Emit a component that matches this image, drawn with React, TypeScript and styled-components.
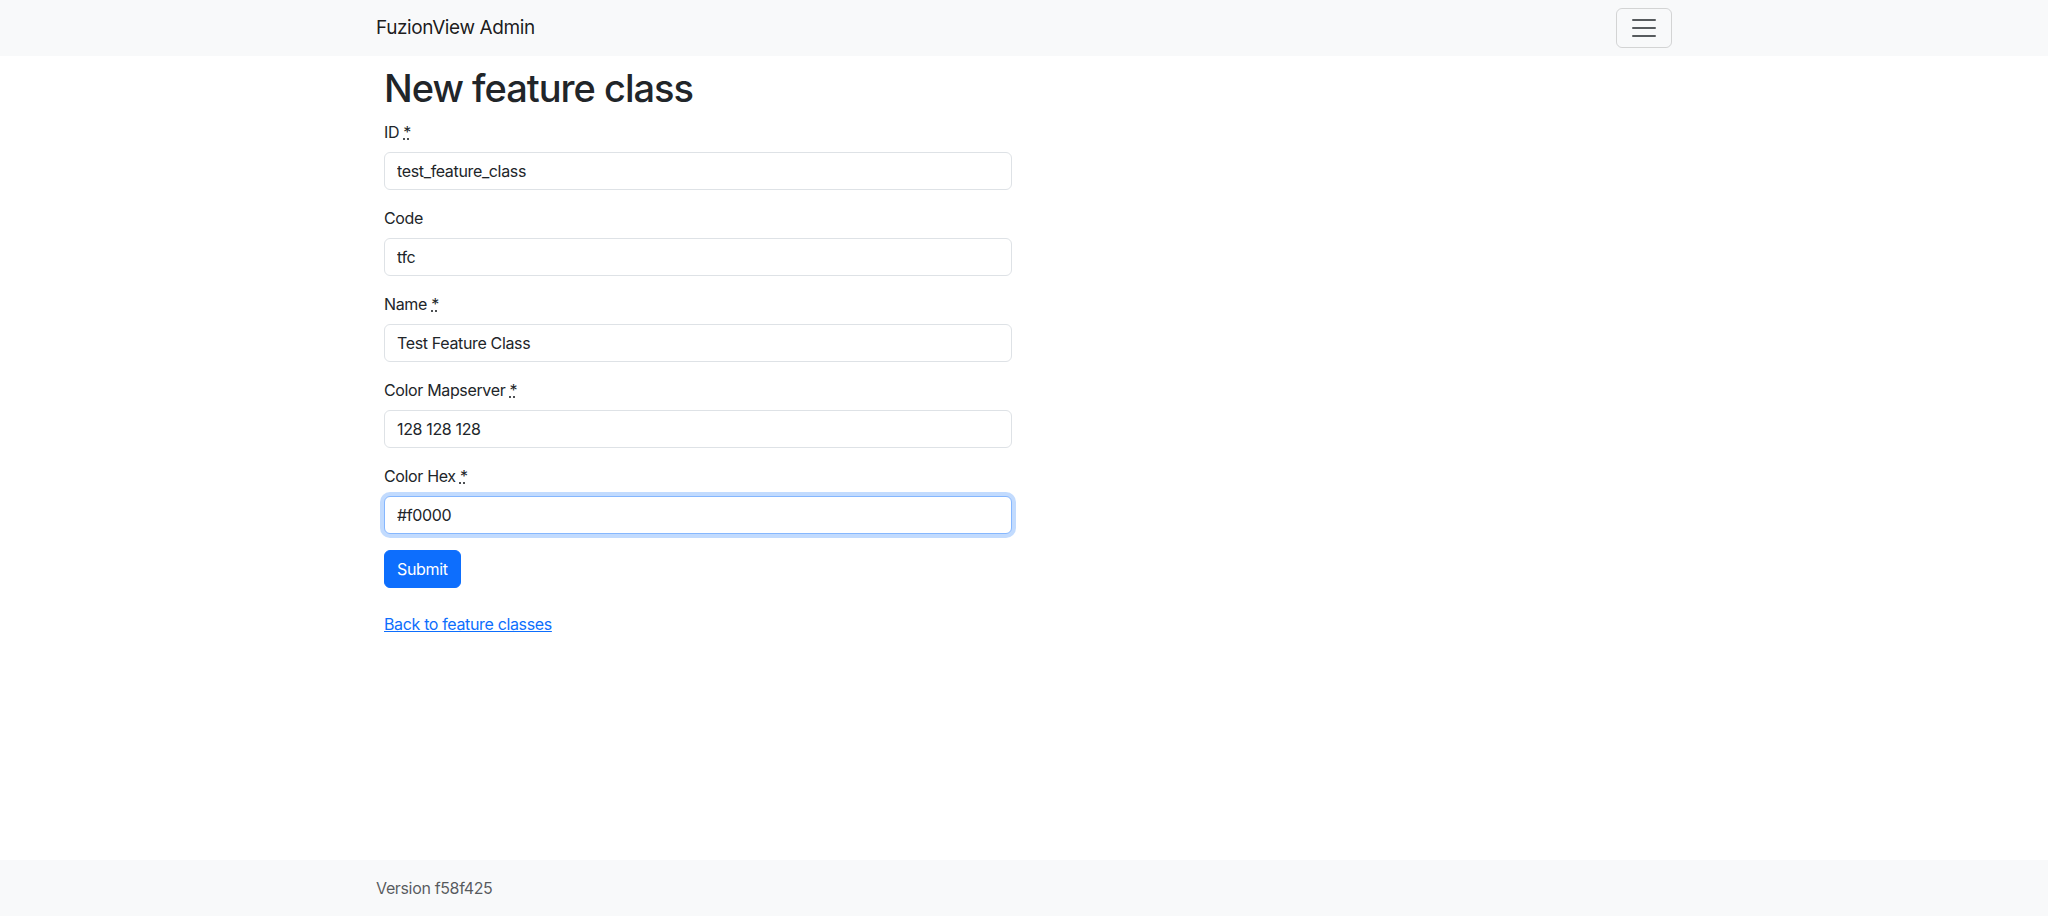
import React from "react";
import styled, { createGlobalStyle, css } from "styled-components";

const GlobalStyle = createGlobalStyle`
  *, *::before, *::after { box-sizing: border-box; }
  html, body { margin: 0; padding: 0; }
  body {
    font-family: Inter, "Liberation Sans", Arial, sans-serif;
    font-size: 16px;
    line-height: 1.5;
    color: #212529;
    background: #fff;
    -webkit-font-smoothing: antialiased;
  }
`;

const Page = styled.div`
  min-height: 100vh;
  display: flex;
  flex-direction: column;
`;

const Container = styled.div`
  width: 1320px;
  margin: 0 auto;
  padding: 0 12px;
`;

const NavBar = styled.nav`
  background: #f8f9fa;
  padding: 8px 0;
`;

const NavInner = styled(Container)`
  display: flex;
  align-items: center;
  justify-content: space-between;
`;

const Brand = styled.a`
  font-size: 19px;
  line-height: 30px;
  padding: 5px 0;
  color: rgba(0, 0, 0, 0.9);
  text-decoration: none;
  letter-spacing: -0.4px;
`;

const Toggler = styled.button`
  width: 56px;
  height: 40px;
  padding: 4px 12px;
  border: 1px solid rgba(0, 0, 0, 0.15);
  border-radius: 6px;
  background: transparent;
  display: flex;
  align-items: center;
  justify-content: center;
  cursor: pointer;
`;

const Main = styled.main`
  flex: 1;
`;

const Content = styled.div`
  padding: 8px;
`;

const Title = styled.h1`
  font-size: 38px;
  font-weight: 500;
  line-height: 48px;
  margin: 0 0 8px;
  letter-spacing: -1px;
`;

const Form = styled.form`
  width: 628px;
`;

const Group = styled.div`
  margin-bottom: 16px;
`;

const Label = styled.label`
  display: inline-block;
  margin-bottom: 8px;
  letter-spacing: -0.35px;
`;

const Req = styled.abbr`
  text-decoration: underline dotted;
  cursor: help;
`;

const Input = styled.input<{ $focused?: boolean }>`
  display: block;
  width: 100%;
  height: 38px;
  padding: 6px 12px;
  font: inherit;
  font-size: 16px;
  line-height: 1.5;
  color: #212529;
  background: #fff;
  border: 1px solid #dee2e6;
  border-radius: 6px;
  outline: none;
  letter-spacing: -0.35px;
  ${(p) =>
    p.$focused &&
    css`
      border-color: #86b7fe;
      box-shadow: 0 0 0 4px rgba(13, 110, 253, 0.25);
    `}
  &:focus {
    border-color: #86b7fe;
    box-shadow: 0 0 0 4px rgba(13, 110, 253, 0.25);
  }
`;

const SubmitButton = styled.button`
  height: 38px;
  padding: 6px 12px;
  font: inherit;
  font-size: 16px;
  line-height: 1.5;
  color: #fff;
  background: #0d6efd;
  border: 1px solid #0d6efd;
  border-radius: 6px;
  cursor: pointer;
  letter-spacing: -0.35px;
`;

const BackLink = styled.a`
  display: inline-block;
  margin-top: 24px;
  color: #0d6efd;
  text-decoration: underline;
  letter-spacing: -0.35px;
`;

const Footer = styled.footer`
  background: #f8f9fa;
  padding: 16px 0;
`;

const FooterText = styled.span`
  color: rgba(33, 37, 41, 0.75);
  letter-spacing: -0.35px;
`;

type Field = { id: string; label: string; required: boolean; value: string; focused?: boolean };

const fields: Field[] = [
  { id: "id", label: "ID", required: true, value: "test_feature_class" },
  { id: "code", label: "Code", required: false, value: "tfc" },
  { id: "name", label: "Name", required: true, value: "Test Feature Class" },
  { id: "color_mapserver", label: "Color Mapserver", required: true, value: "128 128 128" },
  { id: "color_hex", label: "Color Hex", required: true, value: "#f0000", focused: true },
];

export default function App() {
  return (
    <>
      <GlobalStyle />
      <Page>
        <NavBar>
          <NavInner>
            <Brand href="#">FuzionView Admin</Brand>
            <Toggler type="button" aria-label="Toggle navigation">
              <svg width="30" height="30" viewBox="0 0 30 30">
                <path
                  d="M4 7h22M4 15h22M4 23h22"
                  stroke="rgba(33,37,41,0.75)"
                  strokeWidth="2"
                  strokeLinecap="round"
                  strokeMiterlimit="10"
                />
              </svg>
            </Toggler>
          </NavInner>
        </NavBar>
        <Main>
          <Container>
            <Content>
              <Title>New feature class</Title>
              <Form onSubmit={(e) => e.preventDefault()}>
                {fields.map((f) => (
                  <Group key={f.id}>
                    <Label htmlFor={f.id}>
                      {f.label}
                      {f.required && (
                        <>
                          {" "}
                          <Req title="required">*</Req>
                        </>
                      )}
                    </Label>
                    <Input
                      id={f.id}
                      type="text"
                      defaultValue={f.value}
                      $focused={f.focused}
                      autoFocus={f.focused}
                    />
                  </Group>
                ))}
                <SubmitButton type="submit">Submit</SubmitButton>
              </Form>
              <BackLink href="#">Back to feature classes</BackLink>
            </Content>
          </Container>
        </Main>
        <Footer>
          <Container>
            <FooterText>Version f58f425</FooterText>
          </Container>
        </Footer>
      </Page>
    </>
  );
}
